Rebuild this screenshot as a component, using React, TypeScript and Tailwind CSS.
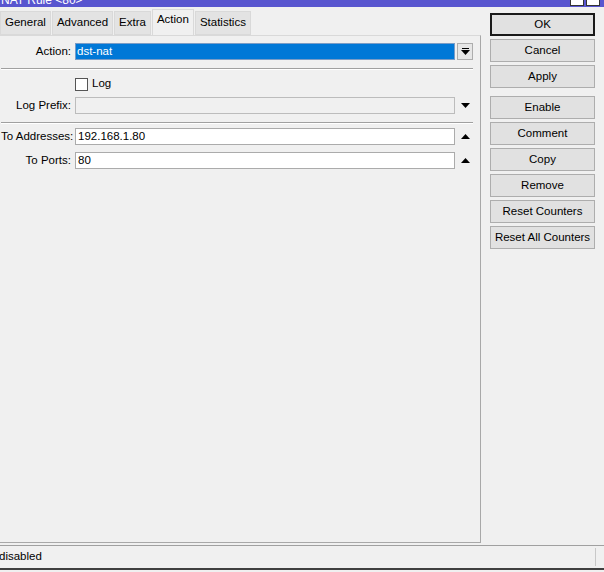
import { useState } from "react";

const tabs = ["General", "Advanced", "Extra", "Action", "Statistics"];
const buttons = [
  "Cancel",
  "Apply",
  "Enable",
  "Comment",
  "Copy",
  "Remove",
  "Reset Counters",
  "Reset All Counters",
];

const UpArrow = () => (
  <svg width="9" height="5" viewBox="0 0 9 5">
    <path d="M0 5 L4.5 0 L9 5 Z" fill="#000" />
  </svg>
);

const DownArrow = () => (
  <svg width="9" height="5" viewBox="0 0 9 5">
    <path d="M0 0 L4.5 5 L9 0 Z" fill="#000" />
  </svg>
);

const Separator = () => (
  <div className="h-[2px] w-[472px] border-t border-[#a0a0a0] border-b border-b-white" />
);

const App = () => {
  const [active, setActive] = useState("Action");
  const [log, setLog] = useState(false);

  return (
    <div className="w-[604px] h-[572px] bg-[#f0f0f0] overflow-hidden text-[11.5px] text-black font-['Liberation_Sans',Arial,sans-serif] flex flex-col">
      {/* title bar, mostly cut off */}
      <div className="h-[7px] bg-[#5855cf] flex justify-between overflow-hidden shrink-0">
        <p className="text-white text-[12px] leading-[12px] -mt-[6px] ml-[1px]">
          NAT Rule &lt;80&gt;
        </p>
        <div className="flex gap-[2px] mr-[4px] -mt-[6px]">
          <div className="w-[14px] h-[12px] border border-[#333] bg-white" />
          <div className="w-[14px] h-[12px] border border-[#333] bg-white" />
        </div>
      </div>

      <div className="flex flex-1">
        {/* left part */}
        <div className="w-[481px] flex flex-col">
          <div className="flex items-end h-[26px] mt-[2px]">
            {tabs.map((tab) => (
              <button
                key={tab}
                onClick={() => setActive(tab)}
                className={`border border-[#d9d9d9] px-[4px] mr-[1px] ${
                  active === tab
                    ? "h-[26px] bg-[#f0f0f0] border-b-0 border-[#c8c8c8] pb-[5px]"
                    : "h-[24px] bg-[#e3e3e3] pb-[1px]"
                }`}
              >
                {tab}
              </button>
            ))}
          </div>

          <div className="flex-1 border-r border-b border-[#a8a8a8] -ml-[1px] border-l border-t border-t-[#d9d9d9] pt-[7px] pl-[1px] mb-[2px]">
            <div className="flex items-center h-[17px]">
              <span className="w-[70px] text-right mr-[4px]">Action:</span>
              <div className="w-[380px] h-[17px] border border-[#7a9cc6] bg-[#0078d7] flex items-center px-[1px]">
                <span className="text-white leading-[13px]">dst-nat</span>
              </div>
              <div className="ml-[2px] w-[16px] h-[17px] border border-[#adadad] bg-[#e6e6e6] flex flex-col items-center justify-center gap-[1px]">
                <div className="w-[7px] h-[1px] bg-black" />
                <DownArrow />
              </div>
            </div>

            <div className="mt-[8px]">
              <Separator />
            </div>

            <div className="flex items-center h-[14px] mt-[7px] ml-[74px]">
              <button
                onClick={() => setLog(!log)}
                className="w-[13px] h-[13px] border border-[#555] bg-white"
              />
              <span className="ml-[4px]">Log</span>
            </div>

            <div className="flex items-center h-[17px] mt-[6px]">
              <span className="w-[70px] text-right mr-[4px]">Log Prefix:</span>
              <div className="w-[380px] h-[17px] border border-[#bcbcbc] bg-[#f0f0f0]" />
              <div className="w-[18px] flex justify-center ml-[1px]">
                <DownArrow />
              </div>
            </div>

            <div className="mt-[8px]">
              <Separator />
            </div>

            <div className="flex items-center h-[17px] mt-[4px]">
              <span className="w-[70px] text-right mr-[4px] whitespace-nowrap">To Addresses:</span>
              <div className="w-[380px] h-[17px] border border-[#ababab] bg-white flex items-center px-[2px]">
                192.168.1.80
              </div>
              <div className="w-[18px] flex justify-center ml-[1px]">
                <UpArrow />
              </div>
            </div>

            <div className="flex items-center h-[17px] mt-[7px]">
              <span className="w-[70px] text-right mr-[4px]">To Ports:</span>
              <div className="w-[380px] h-[17px] border border-[#ababab] bg-white flex items-center px-[2px]">
                80
              </div>
              <div className="w-[18px] flex justify-center ml-[1px]">
                <UpArrow />
              </div>
            </div>
          </div>
        </div>

        {/* right buttons */}
        <div className="ml-[9px] pt-[6px] flex flex-col w-[105px]">
          <button className="h-[23px] border-2 border-[#1a1a1a] bg-[#e1e1e1]">OK</button>
          {buttons.map((b, i) => (
            <button
              key={b}
              className={`h-[23px] border border-[#adadad] bg-[#e1e1e1] whitespace-nowrap ${
                i === 2 ? "mt-[8px]" : "mt-[3px]"
              }`}
            >
              {b}
            </button>
          ))}
        </div>
      </div>

      {/* status bar */}
      <div className="h-[23px] border-t border-[#a0a0a0] flex items-center justify-between shrink-0">
        <span className="-ml-[1px]">disabled</span>
        <div className="w-[1px] h-[18px] bg-[#c8c8c8] mr-[8px]" />
      </div>
      <div className="h-[4px] border-t-2 border-[#404040] bg-[#f0f0f0] shrink-0" />
    </div>
  );
};

export default App;
